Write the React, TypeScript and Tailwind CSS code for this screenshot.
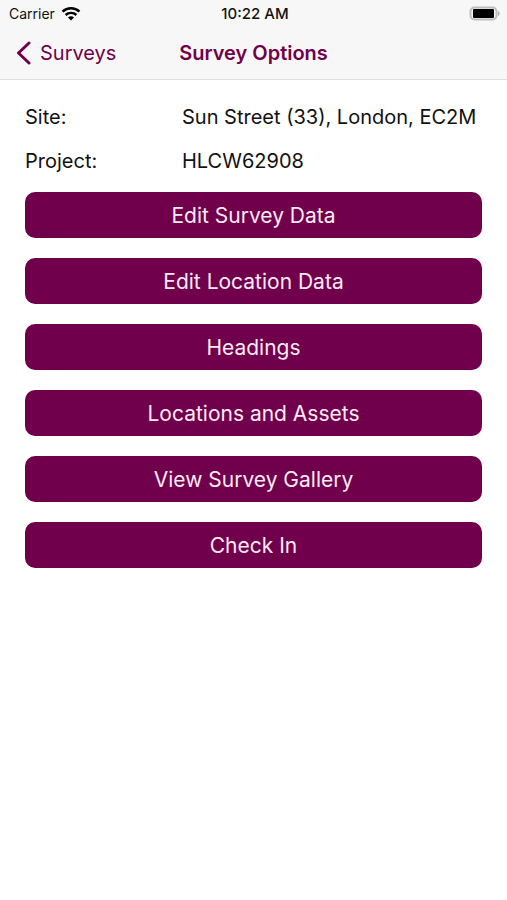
const details = [
  { label: "Site:", value: "Sun Street (33), London, EC2M" },
  { label: "Project:", value: "HLCW62908" },
];

const options = [
  "Edit Survey Data",
  "Edit Location Data",
  "Headings",
  "Locations and Assets",
  "View Survey Gallery",
  "Check In",
];

const WifiIcon = () => (
  <svg width="20" height="14" viewBox="0 0 20 14" fill="none" stroke="#000" aria-hidden="true">
    <path d="M1.6 4.6C6.2.2 13.8.2 18.4 4.6" strokeWidth="2.6" />
    <path d="M4.6 8C7.6 5.2 12.4 5.2 15.4 8" strokeWidth="2.4" />
    <path d="M10 13.4 7 10.4C8.7 9 11.3 9 13 10.4Z" fill="#000" stroke="none" />
  </svg>
);

const BatteryIcon = () => (
  <svg width="32" height="16" viewBox="0 0 32 16" aria-hidden="true">
    <rect x="1.5" y="1.5" width="26" height="12" rx="4" fill="#f7f7f7" stroke="#bdbdbd" strokeWidth="2" />
    <rect x="4" y="3" width="21" height="9" rx="1" fill="#000" />
    <path d="M29 5C31.2 6 31.2 9 29 10Z" fill="#b0b0b0" />
  </svg>
);

const StatusBar = () => (
  <div className="grid grid-cols-3 items-center h-[27px] pl-[9px] pr-[6px] text-[#111]">
    <div className="flex items-center gap-[6px] text-sm">
      <span>Carrier</span>
      <WifiIcon />
    </div>
    <span className="text-center text-[15px] leading-[27px] font-medium">10:22 AM</span>
    <div className="flex justify-end">
      <BatteryIcon />
    </div>
  </div>
);

const NavBar = () => (
  <nav className="grid grid-cols-[1fr_auto_1fr] items-center h-[52px] px-4 text-[#70004b]">
    <a href="#surveys" className="flex items-center gap-[9px] text-xl">
      <svg width="15" height="24" viewBox="0 0 15 24" fill="none" stroke="currentColor" aria-hidden="true">
        <path d="M13 2 2.5 12 13 22" strokeWidth="3" strokeLinecap="round" strokeLinejoin="round" />
      </svg>
      Surveys
    </a>
    <h1 className="text-xl font-semibold">Survey Options</h1>
  </nav>
);

const App = () => {
  return (
    <div className="min-h-screen bg-white font-['Inter',sans-serif]">
      <header className="bg-[#f7f7f7] border-b border-[#dfdfdf]">
        <StatusBar />
        <NavBar />
      </header>
      <main className="px-[25px] pt-[15px]">
        <dl className="text-xl text-[#111]">
          {details.map((item) => (
            <div key={item.label} className="flex items-center h-[44px]">
              <dt className="w-[157px]">{item.label}</dt>
              <dd>{item.value}</dd>
            </div>
          ))}
        </dl>
        <div className="flex flex-col gap-5 mt-[9px]">
          {options.map((option) => (
            <button
              key={option}
              type="button"
              className="w-full h-[46px] pt-0.5 rounded-[10px] bg-[#70004b] text-[#fbe9f5] text-[21px] cursor-pointer"
            >
              {option}
            </button>
          ))}
        </div>
      </main>
    </div>
  );
};

export default App;
